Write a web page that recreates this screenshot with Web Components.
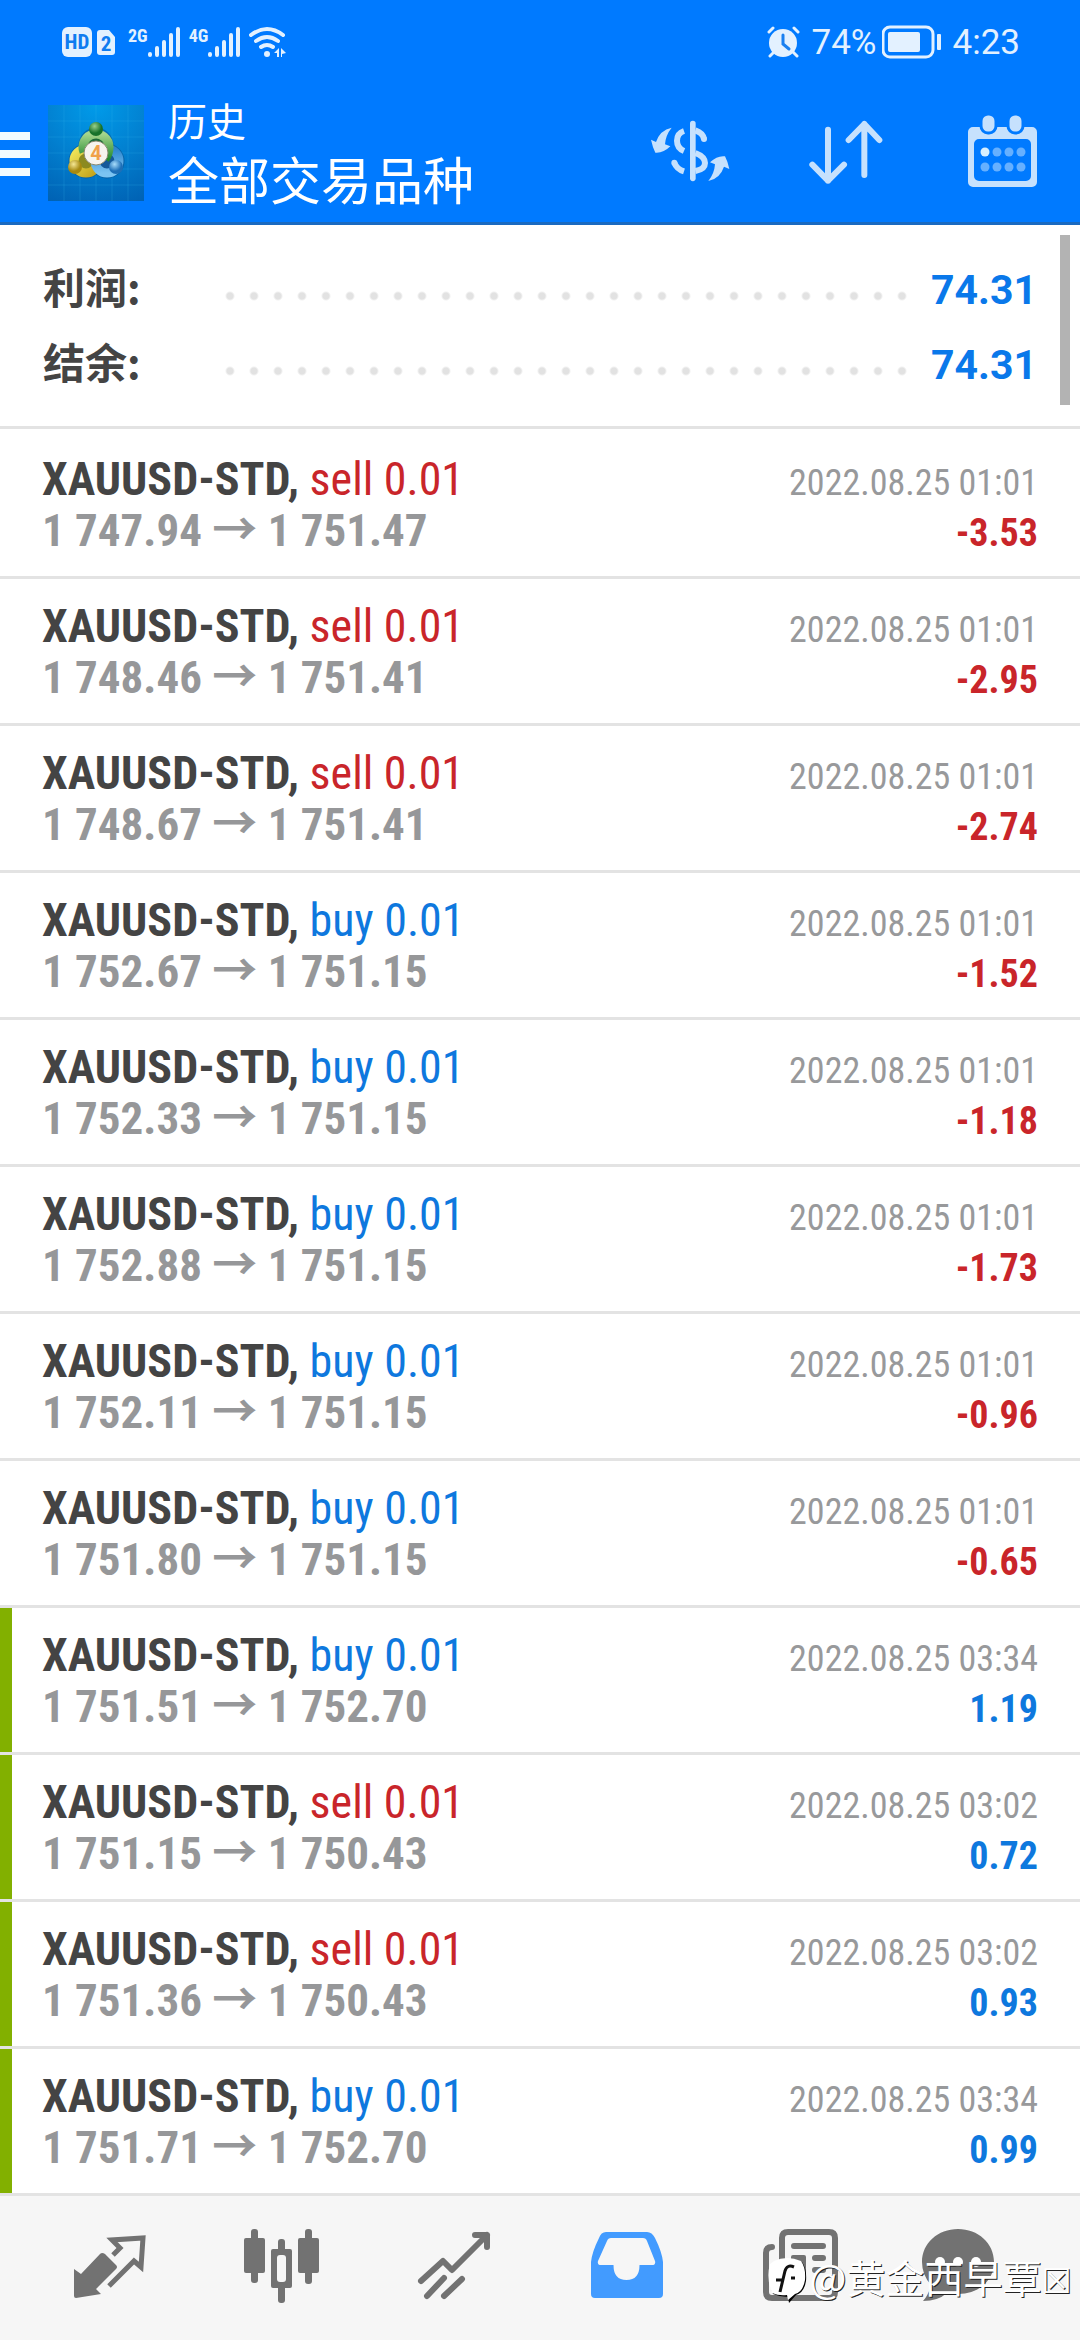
<!DOCTYPE html>
<html lang="zh-CN">
<head>
<meta charset="utf-8">
<meta name="viewport" content="width=device-width, initial-scale=1">
<title>历史</title>
<style>
  html, body { margin: 0; min-height: 100%; background: #fff; }
  body { font-family: Roboto, "Noto Sans CJK SC", sans-serif; }
</style>
</head>
<body>
<history-app></history-app>

<template id="status-bar">
  <style>
    :host { display: flex; align-items: center; justify-content: space-between; height: 84px; padding: 0 60px 0 62px; color: #e3f1ff; font: 35px/1 Roboto, sans-serif; }
    svg { display: block; fill: currentColor; }
    .group { display: flex; align-items: center; gap: 8px; }
    .gen { display: flex; align-items: flex-start; height: 32px; font: bold 18px/20px "Roboto Condensed", sans-serif; }
    .right { gap: 12px; }
    .battery { display: flex; align-items: center; gap: 5px; }
    .stroke { fill: none; stroke: currentColor; }
  </style>
  <div class="group">
    <svg width="58" height="32" viewBox="0 0 58 32">
      <rect y="1" width="30" height="30" rx="6"/>
      <path d="M38 4h9l6 7v15a3 3 0 0 1-3 3H38a3 3 0 0 1-3-3V7a3 3 0 0 1 3-3z"/>
      <text x="15" y="23" text-anchor="middle" font-family="Roboto Condensed, sans-serif" font-weight="bold" font-size="21" fill="#0f7cf0">HD</text>
      <text x="44" y="25" text-anchor="middle" font-family="Roboto Condensed, sans-serif" font-weight="bold" font-size="21" fill="#0f7cf0">2</text>
    </svg>
    <div class="gen"><span>2G</span>
      <svg width="33" height="32" viewBox="0 0 33 32"><path class="stroke" stroke-width="4" stroke-linecap="round" d="M2 28v1M9 22v7M16 16v13M23 9v20M30 3v26"/></svg></div>
    <div class="gen"><span>4G</span>
      <svg width="33" height="32" viewBox="0 0 33 32"><path class="stroke" stroke-width="4" stroke-linecap="round" d="M2 28v1M9 22v7M16 16v13M23 9v20M30 3v26"/></svg></div>
    <svg width="40" height="32" viewBox="0 0 40 32">
      <path class="stroke" stroke-width="4" stroke-linecap="round" d="M2 9q16-12 32 0M7 15q11-8 22 0M12 21q6-4 12 0"/>
      <circle cx="18" cy="28" r="3"/><path d="M30 22v9h-2v-4h-3zM32 31v-9l1 1 4 4-4 1v3z"/>
    </svg>
  </div>
  <div class="group right">
    <svg width="33" height="32" viewBox="0 0 33 32">
      <circle cx="16" cy="17" r="14"/>
      <path class="stroke" stroke-width="3" stroke-linecap="round" d="M2 6l4-4M31 6l-4-4M7 26l-4 4M26 26l4 4"/>
      <path d="M16 9v9l6 5" fill="none" stroke="#1a80f0" stroke-width="3" stroke-linecap="round"/>
    </svg>
    <div class="battery"><span>74%</span>
    <svg width="59" height="34" viewBox="0 0 59 34">
      <rect class="stroke" x="1" y="2" width="50" height="30" rx="7" stroke-width="3"/>
      <rect x="6" y="7" width="32" height="20" rx="2"/><rect x="55" y="9" width="4" height="16" rx="1"/>
    </svg></div>
    <span>4:23</span>
  </div>
</template>

<template id="app-bar">
  <style>
    :host { display: flex; align-items: center; height: 138px; border-bottom: 3px solid #1a6ac0; color: #fff; font-family: "Noto Sans CJK SC", sans-serif; }
    button { border: 0; padding: 0; background: none; color: #c6e1fd; display: flex; align-items: center; justify-content: center; }
    svg { display: block; }
    .menu { width: 30px; height: 96px; margin-right: 18px; color: #fff; }
    .titles { margin-left: 24px; padding-bottom: 6px; flex: 1; }
    h1, p { margin: 0; font-weight: 400; white-space: nowrap; }
    p { font-size: 39px; line-height: 55px; }
    h1 { font-size: 51px; line-height: 62px; }
    .tool { width: 156px; height: 96px; }
  </style>
  <button class="menu" aria-label="菜单"><svg width="30" height="46" viewBox="0 0 30 46"><path fill="#f2fbff" d="M0 2h30v8H0zM0 20h30v8H0zM0 38h30v8H0z"/></svg></button>
  <svg width="96" height="96" viewBox="0 0 96 96">
    <defs>
      <radialGradient id="bg" cx=".5" cy="0" r="1.1"><stop offset="0" stop-color="#009bea"/><stop offset=".5" stop-color="#0280d0"/><stop offset="1" stop-color="#0062b4"/></radialGradient>
      <linearGradient id="g" x2="0" y2="1"><stop offset="0" stop-color="#a5d58c"/><stop offset="1" stop-color="#238a30"/></linearGradient>
      <linearGradient id="y" x2="1" y2="1"><stop offset="0" stop-color="#efe65a"/><stop offset="1" stop-color="#c2a118"/></linearGradient>
      <linearGradient id="b" x2="0" y2="1"><stop offset="0" stop-color="#2d86cf"/><stop offset="1" stop-color="#7cc4f2"/></linearGradient>
      <radialGradient id="gh" cx=".4" cy=".3"><stop offset="0" stop-color="#9ad08a"/><stop offset="1" stop-color="#17722a"/></radialGradient>
      <radialGradient id="yh" cx=".4" cy=".3"><stop offset="0" stop-color="#f5e795"/><stop offset="1" stop-color="#a68910"/></radialGradient>
      <radialGradient id="bh" cx=".4" cy=".3"><stop offset="0" stop-color="#a8dcfa"/><stop offset="1" stop-color="#1d6fb8"/></radialGradient>
    </defs>
    <rect width="96" height="96" fill="url(#bg)"/>
    <path d="M16 0v96M32 0v96M48 0v96M64 0v96M80 0v96M0 16h96M0 32h96M0 48h96M0 64h96M0 80h96" stroke="#3cb4f0" stroke-opacity=".22"/>
    <g fill="none" stroke="#0a4c86" stroke-opacity=".5" stroke-width="11"><circle cx="48" cy="40" r="12"/><circle cx="38" cy="56" r="12"/><circle cx="59" cy="56" r="12"/></g>
    <circle cx="38" cy="56" r="12" fill="#8c8a20" stroke="url(#y)" stroke-width="9"/>
    <circle cx="59" cy="56" r="12" fill="#14599a" stroke="url(#b)" stroke-width="9"/>
    <path d="M36 47a13 13 0 1 1 25-5q0 7-4 12" fill="#1c6a38" stroke="url(#g)" stroke-width="9"/>
    <circle cx="48" cy="24" r="7" fill="url(#gh)"/><circle cx="27" cy="62" r="7" fill="url(#yh)"/><circle cx="68" cy="62" r="7" fill="url(#bh)"/>
    <circle cx="48" cy="48" r="12" fill="#f6f4ee" stroke="#8a8a70" stroke-width="1"/>
    <text x="48" y="55" text-anchor="middle" font-family="Roboto, sans-serif" font-weight="bold" font-size="20" fill="#f0a14a">4</text>
  </svg>
  <div class="titles"><p>历史</p><h1>全部交易品种</h1></div>
  <button class="tool" aria-label="交易品种">
    <svg width="80" height="80" viewBox="30 39 240 240">
      <path d="M158.500 71V235" stroke="currentColor" stroke-width="17" stroke-linecap="round"/>
      <g fill="none" stroke="currentColor" stroke-width="18">
        <path d="M132 93Q111 100 111 122t21 31"/><path d="M103 188Q110 207 132 214" /><path d="M166 91Q189 99 192 117M166 159Q195 170 195 189t-29 24"/>
      </g>
      <circle cx="103" cy="188" r="9" fill="currentColor"/><circle cx="192" cy="117" r="9" fill="currentColor"/>
      <path fill="currentColor" d="M95 83Q60 90 48 126L33 119Q38 142 46 158Q70 160 91 139L75 133Q77 105 95 83zM205 243Q240 236 252 200L268 207Q263 184 255 169Q232 166 210 187L225 193Q223 221 205 243z"/>
    </svg>
  </button>
  <button class="tool" aria-label="排序">
    <svg width="80" height="80" viewBox="498 39 240 240"><path fill="none" stroke="currentColor" stroke-width="18" stroke-linecap="round" stroke-linejoin="round" d="M564 89V242M517 194L564 242 612 194M673 225V72M626 120L673 72 718 120"/></svg>
  </button>
  <button class="tool" aria-label="日期">
    <svg width="80" height="80" viewBox="0 0 80 80">
      <path fill="currentColor" fill-rule="evenodd" d="M11 14H70a5 5 0 0 1 5 5V69a5 5 0 0 1-5 5H11a5 5 0 0 1-5-5V19a5 5 0 0 1 5-5zM17 26a5 5 0 0 0-5 5V63a5 5 0 0 0 5 5H64a5 5 0 0 0 5-5V31a5 5 0 0 0-5-5z"/>
      <g fill="currentColor" stroke="#007aff" stroke-width="3"><rect x="19" y="1" width="15" height="19" rx="7"/><rect x="46" y="1" width="15" height="19" rx="7"/></g>
      <circle cx="23" cy="39" r="4.500" fill="#d8f0ff"/>
      <g fill="#66b0ff"><circle cx="35" cy="39" r="4.500"/><circle cx="47" cy="39" r="4.500"/><circle cx="59" cy="39" r="4.500"/><circle cx="23" cy="54" r="4.500"/><circle cx="35" cy="54" r="4.500"/><circle cx="47" cy="54" r="4.500"/><circle cx="59" cy="54" r="4.500"/></g>
    </svg>
  </button>
</template>

<template id="summary-line">
  <style>
    :host { display: flex; align-items: baseline; height: 75px; line-height: 75px; font-weight: 700; }
    .label { width: 175px; font: 700 42px/75px "Noto Sans CJK SC", sans-serif; color: #444; }
    .dots { flex: 1; align-self: stretch; background: radial-gradient(circle at 12px 48px, #e2e2e2 3px, transparent 5px) 0 0 / 24px 75px repeat-x; }
    .value { margin-left: 15px; font-size: 41px; color: #0a78ea; }
  </style>
  <span class="label"><slot name="label"></slot></span><span class="dots"></span><span class="value"><slot></slot></span>
</template>

<template id="trade-row">
  <style>
    :host { display: grid; grid-template-columns: 1fr auto; grid-template-rows: 51px 51px; align-items: baseline; padding: 22px 42px 20px; border-bottom: 3px solid #e3e3e3; font: 46px/51px "Roboto Condensed", Roboto, sans-serif; white-space: nowrap; position: relative; }
    :host([profit])::before { content: ""; position: absolute; left: 0; top: 0; bottom: 0; width: 12px; background: #82b000; }
    b { color: #444; }
    .prices { font-size: 45px; font-weight: 700; color: #969799; }
    .arrow { font-family: "Noto Sans CJK SC", sans-serif; line-height: 0; }
    .sell, .loss { color: #c9252a; }
    .buy, .gain { color: #0e78de; }
    .date, .result { text-align: right; }
    .date { font-size: 36px; color: #98999b; }
    .result { font-size: 38px; font-weight: 700; }
  </style>
  <div><b></b> <span class="side"></span></div>
  <div class="date"></div>
  <div class="prices"><span class="open"></span> <span class="arrow">→</span> <span class="close"></span></div>
  <div class="result"></div>
</template>

<template id="watermark-tag">
  <style>
    :host { position: absolute; right: 8px; top: 57px; display: flex; align-items: center; gap: 5px; color: #fff; font: 400 39px/46px "Noto Sans CJK SC", sans-serif; text-shadow: 1px 1px 0 #222; white-space: nowrap; pointer-events: none; }
    svg { display: block; overflow: visible; }
    .box { font-family: "DejaVu Sans", sans-serif; font-size: 34px; }
  </style>
  <svg width="38" height="42" viewBox="0 0 38 42">
    <path d="M7 3Q20-3 34 3 39 10 38 22 36 34 28 36L21 44 20 38Q12 38 5 35-1 20 3 6z" fill="#000" transform="translate(1 1)"/>
    <path d="M7 3Q20-3 34 3 39 10 38 22 36 34 28 36L21 42 20 37Q12 38 5 35-1 20 3 6z" fill="#fff"/>
    <path d="M27 9Q20 6 18 13L13 34M9 22h8M24 20h4" fill="none" stroke="#111" stroke-width="3"/>
  </svg>
  <span>@黄金西早覃<span class="box">☒</span></span>
</template>

<template id="tab-bar">
  <style>
    :host { display: block; position: relative; background: #f6f6f6; color: #727272; }
    nav { display: flex; padding: 0 24px; height: 144px; }
    a { flex: 1; display: flex; align-items: center; justify-content: center; color: inherit; }
    a[aria-current] { color: #429bff; }
    svg { display: block; overflow: visible; fill: currentColor; }
    .line { fill: none; stroke: currentColor; stroke-linecap: round; stroke-linejoin: round; }
  </style>
  <nav>
    <a href="#quotes" aria-label="行情"><svg width="80" height="80" viewBox="0 0 80 80">
      <path d="M4 41l7 5 19-20q2-2 5 0l11 11q2 2 0 4L26 61l5 5-25 4q-2 0-2-2z"/>
      <path fill="none" stroke="currentColor" stroke-width="5" d="M43 27l7-7-8-8 31-2-2 29-7-6-25 25"/></svg></a>
    <a href="#chart" aria-label="图表"><svg width="80" height="80" viewBox="0 0 80 80">
      <rect x="2" y="10" width="21" height="35" rx="2"/><rect x="9" y="1" width="7" height="54" rx="3"/>
      <rect x="29" y="21" width="21" height="39" rx="2"/><rect x="36" y="11" width="7" height="64" rx="3"/><rect x="35" y="27" width="9" height="27" rx="3" fill="#f6f6f6"/>
      <rect x="56" y="10" width="21" height="35" rx="2"/><rect x="63" y="1" width="7" height="55" rx="3"/></svg></a>
    <a href="#trade" aria-label="交易"><svg width="80" height="80" viewBox="0 0 80 80">
      <path class="line" stroke-width="6" d="M7 53L29 33l9 9L73 7M61 7H73V19M30 50L13 68M48 51L30 68"/></svg></a>
    <a href="#history" aria-label="历史" aria-current="page"><svg width="80" height="80" viewBox="0 0 80 80">
      <path fill-rule="evenodd" d="M20 4H61Q66 4 69 10 76 24 77 34V66q0 4-4 4H9q-4 0-4-4V34Q6 24 13 10 15 4 20 4zM25 10q-3 0-4 3L12 33q-1 4 3 4H27.500q0 15 13 15t13-15H66q4 0 3-4L61 13q-1-3-4-3z"/></svg></a>
    <a href="#news" aria-label="新闻"><svg width="80" height="80" viewBox="-1 0 80 80">
      <path class="line" stroke-width="6" d="M13 19q-6 0-6 6V64q0 6 6 6H70q6 0 6-6V10q0-6-6-6H29q-6 0-6 6V64q0 6-6 6"/>
      <path class="line" stroke-width="6" d="M35 18H64M56 30H64M56 42H64"/><rect x="32" y="27" width="15" height="22" rx="2"/></svg></a>
    <a href="#chat" aria-label="消息"><svg width="80" height="80" viewBox="0 0 80 80">
      <path d="M28 1C48 1 64 15 64 34S48 66 28 66Q22 66 17 65 8 73-7 73-2 68 1 57-8 47-8 34C-8 15 8 1 28 1z"/>
      <g fill="#fff"><circle cx="10" cy="34" r="5"/><circle cx="28" cy="34" r="5"/><circle cx="46" cy="34" r="5"/></g></svg></a>
  </nav>
  <watermark-tag></watermark-tag>
</template>

<template id="history-app">
  <style>
    :host { display: flex; flex-direction: column; min-height: 100vh; background: #fff; }
    header { background: #007aff; }
    main { flex: 1; position: relative; }
    .summary { padding: 23px 43px 28px; border-bottom: 3px solid #e3e3e3; margin-bottom: 3px; }
    .thumb { position: absolute; top: 10px; right: 10px; width: 10px; height: 170px; background: #b3b3b3; }
  </style>
  <header><status-bar></status-bar><app-bar></app-bar></header>
  <main>
    <div class="summary">
      <summary-line><span slot="label">利润:</span>74.31</summary-line>
      <summary-line><span slot="label">结余:</span>74.31</summary-line>
    </div>
    <div class="rows" role="list"></div>
    <div class="thumb"></div>
  </main>
  <tab-bar></tab-bar>
</template>

<script>
  class TemplateElement extends HTMLElement {
    constructor() {
      super();
      const t = document.getElementById(this.localName);
      this.attachShadow({ mode: 'open' }).append(t.content.cloneNode(true));
    }
  }
  class StatusBar extends TemplateElement {}
  class AppBar extends TemplateElement {}
  class SummaryLine extends TemplateElement {}
  class WatermarkTag extends TemplateElement {}
  class TabBar extends TemplateElement {}

  class TradeRow extends TemplateElement {
    set trade([side, open, close, time, result]) {
      const $ = s => this.shadowRoot.querySelector(s);
      $('b').textContent = 'XAUUSD-STD,';
      $('.side').textContent = side + ' 0.01';
      $('.side').classList.add(side);
      $('.open').textContent = open;
      $('.close').textContent = close;
      $('.date').textContent = '2022.08.25 ' + time;
      $('.result').textContent = result;
      const gain = Number(result) > 0;
      $('.result').classList.add(gain ? 'gain' : 'loss');
      this.toggleAttribute('profit', gain);
      this.setAttribute('role', 'listitem');
    }
  }

  const trades = [
    ['sell', '1 747.94', '1 751.47', '01:01', '-3.53'],
    ['sell', '1 748.46', '1 751.41', '01:01', '-2.95'],
    ['sell', '1 748.67', '1 751.41', '01:01', '-2.74'],
    ['buy', '1 752.67', '1 751.15', '01:01', '-1.52'],
    ['buy', '1 752.33', '1 751.15', '01:01', '-1.18'],
    ['buy', '1 752.88', '1 751.15', '01:01', '-1.73'],
    ['buy', '1 752.11', '1 751.15', '01:01', '-0.96'],
    ['buy', '1 751.80', '1 751.15', '01:01', '-0.65'],
    ['buy', '1 751.51', '1 752.70', '03:34', '1.19'],
    ['sell', '1 751.15', '1 750.43', '03:02', '0.72'],
    ['sell', '1 751.36', '1 750.43', '03:02', '0.93'],
    ['buy', '1 751.71', '1 752.70', '03:34', '0.99']
  ];

  class HistoryApp extends TemplateElement {
    connectedCallback() {
      const rows = this.shadowRoot.querySelector('.rows');
      for (const trade of trades) {
        const row = document.createElement('trade-row');
        row.trade = trade;
        rows.append(row);
      }
    }
  }

  customElements.define('status-bar', StatusBar);
  customElements.define('app-bar', AppBar);
  customElements.define('summary-line', SummaryLine);
  customElements.define('trade-row', TradeRow);
  customElements.define('watermark-tag', WatermarkTag);
  customElements.define('tab-bar', TabBar);
  customElements.define('history-app', HistoryApp);
</script>
</body>
</html>
